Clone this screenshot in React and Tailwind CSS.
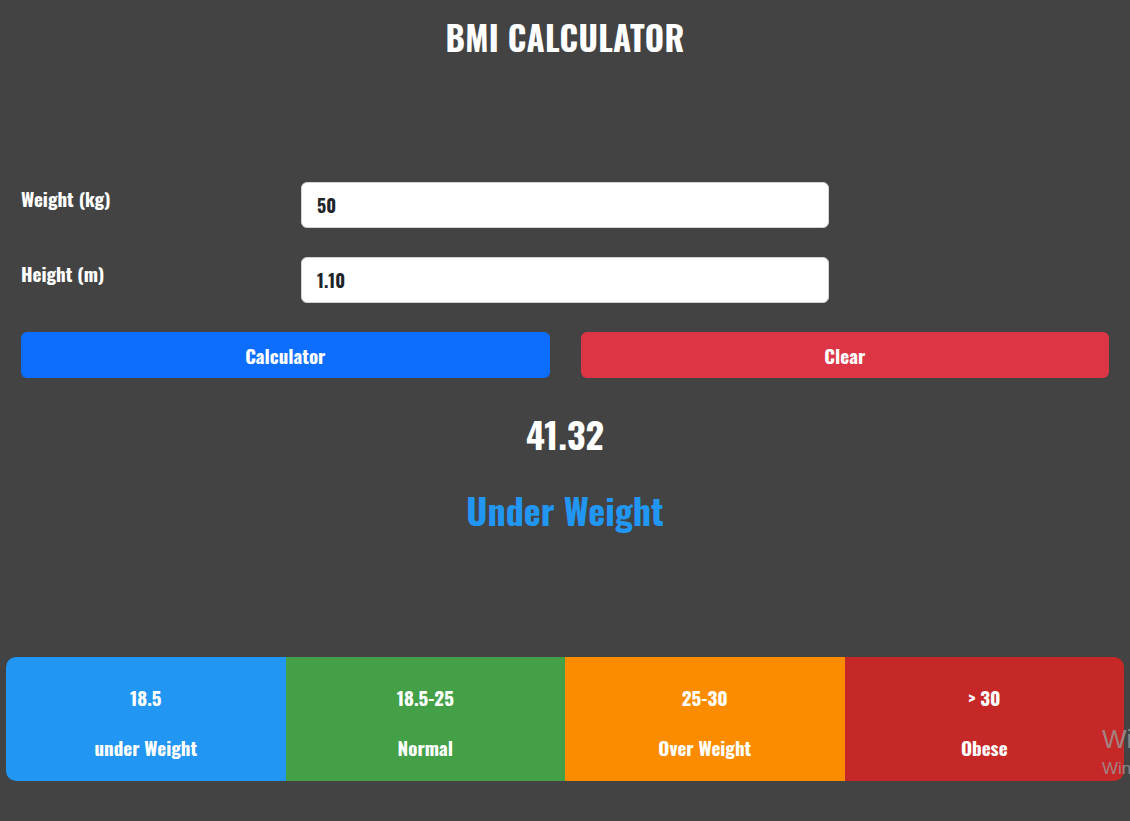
import React, { useState } from 'react'

const FONT = "font-['Oswald','Liberation_Sans_Narrow','DejaVu_Sans_Condensed',sans-serif]"

const RANGES = [
  { range: '18.5', label: 'under Weight', cls: 'bg-[#2196f3] rounded-l-[10px]' },
  { range: '18.5-25', label: 'Normal', cls: 'bg-[#43a047]' },
  { range: '25-30', label: 'Over Weight', cls: 'bg-[#fb8c00]' },
  { range: '> 30', label: 'Obese', cls: 'bg-[#c62828] rounded-r-[10px]' },
]

const Field = ({ label, value, onChange }) => (
  <div className="flex items-center h-[46px]">
    <label className="w-[280px] text-white text-[19px] font-bold -mt-[14px]">{label}</label>
    <input
      value={value}
      onChange={e => onChange(e.target.value)}
      className="w-[528px] h-[46px] bg-white rounded-[6px] border border-[#ced4da] px-[15px] text-[18px] font-bold text-[#212529] outline-none"
    />
  </div>
)

export default function App() {
  const [weight, setWeight] = useState('50')
  const [height, setHeight] = useState('1.10')

  return (
    <div className={`relative min-h-[821px] bg-[#434343] overflow-hidden ${FONT}`}>
      <h1 className="text-center text-white text-[33px] font-bold leading-none pt-[21px] tracking-[0.3px]">BMI CALCULATOR</h1>

      <div className="px-[21px] pt-[128px]">
        <div className="flex flex-col gap-[29px]">
          <Field label="Weight (kg)" value={weight} onChange={setWeight} />
          <Field label="Height (m)" value={height} onChange={setHeight} />
        </div>

        <div className="grid grid-cols-2 gap-[31px] mt-[29px]">
          <button className="h-[46px] rounded-[6px] bg-[#0d6efd] text-white text-[19px] font-bold">Calculator</button>
          <button className="h-[46px] rounded-[6px] bg-[#dc3545] text-white text-[19px] font-bold">Clear</button>
        </div>

        <div className="text-center text-white text-[36px] font-bold leading-none mt-[38px]">41.32</div>
        <div className="text-center text-[#2196f3] text-[36px] font-bold leading-none mt-[40px]">Under Weight</div>
      </div>

      <div className="mx-[6px] mt-[129px] grid grid-cols-4 h-[124px]">
        {RANGES.map(r => (
          <div key={r.label} className={`${r.cls} flex flex-col items-center text-white font-bold text-[19px] leading-none pt-[31px] gap-[31px]`}>
            <span>{r.range}</span>
            <span>{r.label}</span>
          </div>
        ))}
      </div>

      <div className="absolute left-[1102px] top-[726px] text-[#9a9a9a]/80 font-['Liberation_Sans',sans-serif] leading-none pointer-events-none">
        <div className="text-[26px]">Wi</div>
        <div className="text-[17px] mt-[8px]">Win</div>
      </div>
    </div>
  )
}
